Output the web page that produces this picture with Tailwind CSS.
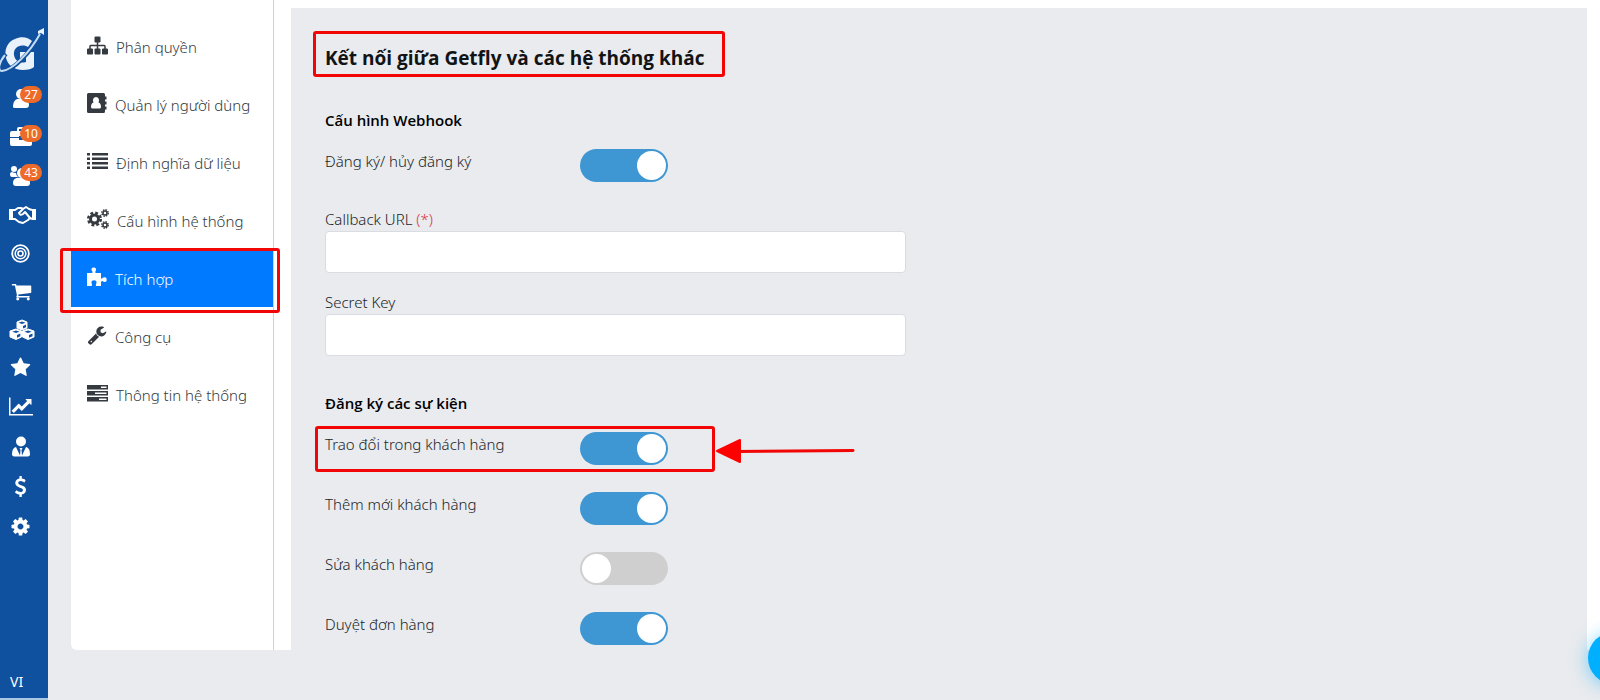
<!DOCTYPE html>
<html lang="vi">
<head>
  <meta charset="UTF-8" />
  <meta name="viewport" content="width=device-width, initial-scale=1.0"/>
  <title>Getfly - Tích hợp</title>
  <script src="https://cdn.jsdelivr.net/npm/@tailwindcss/browser@4"></script>
  <style>
    body {
      font-family: 'Noto Sans', 'Open Sans', sans-serif;
    }
    h1, h2 {
      font-family: 'Open Sans', 'Noto Sans', sans-serif;
    }
  </style>
</head>

<body class="bg-[#e9ebee] text-[#212529] flex min-h-screen overflow-hidden">

<!-- Sidebar -->
<aside class="w-12 shrink-0 min-h-screen bg-[#10519f] text-white flex flex-col border-b-2 border-[#a9c6e6]">
  <a href="#" aria-label="Getfly" class="block mt-7 h-[50px]">
    <svg class="w-12 h-[46px]" viewBox="0 0 48 46" fill="none">
      <path d="M32 13C28 9 21 8 15 11C7 14 4 22 6 30C8 38 15 42 23 42C28 42 32 41 34 39V24H20V30H26V34C20 36 15 33 14 27C13 20 20 15 28 19Z" fill="#e9f1fa"/>
      <path d="M6 26C-1 34 -3 43 3 43C14 42 31 24 41 5" stroke="#10519f" stroke-width="4"/>
      <path d="M5 27C-1 34 -3 43 2 43C13 42 30 24 40 6" stroke="#c5dcf3" stroke-width="2"/>
      <path d="M44 0L44 7L41 5L38 6L38 3Z" fill="#e9f1fa"/>
    </svg>
  </a>

  <nav class="flex flex-col">
    <a href="#" aria-label="Khách hàng" class="relative h-[39px] pl-[10px] flex items-center">
      <svg class="w-[22px] h-[22px]" viewBox="0 0 22 22" fill="currentColor"><circle cx="11" cy="7" r="5"/><path d="M3 20C3 13 7 11 11 12C15 11 19 13 19 18Q19 21 16 21H5Q3 21 3 20Z"/></svg>
      <span class="absolute left-5 top-2 w-[22px] h-[17px] rounded-full bg-[#ee6a28] text-xs leading-[17px] text-center">27</span>
    </a>
    <a href="#" aria-label="Công việc" class="relative h-[39px] pl-[10px] flex items-center">
      <svg class="w-[22px] h-[22px]" viewBox="0 0 22 22" fill="currentColor"><path d="M7 5V3Q7 1 9 1H14Q16 1 16 3V5H20Q22 5 22 7V11H13V10H9V11H0V7Q0 5 2 5ZM9 5H14V3H9ZM0 12H9V14H13V12H22V18Q22 20 20 20H2Q0 20 0 18Z"/></svg>
      <span class="absolute left-5 top-2 w-[22px] h-[17px] rounded-full bg-[#ee6a28] text-xs leading-[17px] text-center">10</span>
    </a>
    <a href="#" aria-label="Nhóm" class="relative h-[39px] pl-[10px] flex items-center">
      <svg class="w-[22px] h-[22px]" viewBox="0 0 22 22" fill="currentColor"><circle cx="4" cy="4" r="3"/><circle cx="12" cy="8" r="5"/><path d="M0 9Q0 7 2 7Q4 8 6 8Q6 10 8 12H2Q0 12 0 9ZM3 18C3 13 7 12 12 13C17 12 20 14 20 18Q20 21 17 21H6Q3 21 3 18Z"/></svg>
      <span class="absolute left-5 top-2 w-[22px] h-[17px] rounded-full bg-[#ee6a28] text-xs leading-[17px] text-center">43</span>
    </a>
    <a href="#" aria-label="Cơ hội" class="h-[39px] pl-[9px] flex items-center">
      <svg class="w-[27px] h-[18px]" viewBox="0 0 27 18" fill="none" stroke="currentColor" stroke-width="2" stroke-linejoin="round"><path d="M0 3H4V14H0ZM27 3H23V14H27Z" fill="currentColor" stroke="none"/><path d="M4 4H6L9 2H12L14 3L17 1L20 3L23 4M4 13H6L10 16L14 17L19 14L21 12L23 13"/><path d="M14 3L10 7Q11 10 14 8L16 6L21 12"/></svg>
    </a>
    <a href="#" aria-label="Mục tiêu" class="h-[38px] pl-[11px] flex items-center">
      <svg class="w-[19px] h-[19px]" viewBox="0 0 19 19" fill="none" stroke="currentColor"><circle cx="9.5" cy="9.500" r="8.300" stroke-width="1.800"/><circle cx="9.500" cy="9.500" r="5.300" stroke-width="1.500"/><circle cx="9.500" cy="9.500" r="2.500" stroke-width="1.600"/></svg>
    </a>
    <a href="#" aria-label="Đơn hàng" class="h-[38px] pl-[11px] flex items-center">
      <svg class="w-[21px] h-[21px]" viewBox="0 0 1792 1792" fill="currentColor"><path d="M704 1536q0 52-38 90t-90 38-90-38-38-90 38-90 90-38 90 38 38 90zm896 0q0 52-38 90t-90 38-90-38-38-90 38-90 90-38 90 38 38 90zm128-1088v512q0 24-16.500 42.500t-40.500 21.500l-1044 122q13 60 13 70 0 16-24 64h920q26 0 45 19t19 45-19 45-45 19h-1024q-26 0-45-19t-19-45q0-11 8-31.500t16-36 21.500-40 15.500-29.500l-177-823h-204q-26 0-45-19t-19-45 19-45 45-19h256q16 0 28.500 6.500t19.500 15.500 13 24.500 8 26 5.500 29.500 4.500 26h1201q26 0 45 19t19 45z"/></svg>
    </a>
    <a href="#" aria-label="Kho" class="h-[38px] pl-[9px] flex items-center">
      <svg class="w-[26px] h-[21px]" viewBox="0 0 26 21">
        <g fill="#fff" stroke="#fff" stroke-width="1" stroke-linejoin="round"><path d="M13 1L18 3V9L13 11L8 9V3Z"/><path d="M7 10L12.500 12V18L7 20.500L1 18V12Z"/><path d="M19 10L25 12V18L19 20.500L13.500 18V12Z"/></g>
        <g fill="#10519f"><path d="M13 2.500L16.500 3.700L13 5L9.500 3.700ZM14 7L17 5.500V8.300L14 9.500Z"/><path d="M7 11.500L10.500 12.700L7 14L3.300 12.700ZM8 16L11.300 14.500V17.300L8 18.700Z"/><path d="M19 11.500L22.700 12.700L19 14L15.500 12.700ZM20 16L23.500 14.500V17.300L20 18.700Z"/></g>
      </svg>
    </a>
    <a href="#" aria-label="Đánh giá" class="h-[38px] pl-[10px] flex items-center">
      <svg class="w-[21px] h-[21px]" viewBox="0 0 1792 1792" fill="currentColor"><path d="M1728 647q0 22-26 48l-363 354 86 500q1 7 1 20 0 21-10.500 35.500t-30.500 14.500q-19 0-40-12l-449-236-449 236q-22 12-40 12-21 0-31.500-14.500t-10.500-35.500q0-6 2-20l86-500-364-354q-25-27-25-48 0-37 56-46l502-73 225-455q19-41 49-41t49 41l225 455 502 73q56 9 56 46z"/></svg>
    </a>
    <a href="#" aria-label="Báo cáo" class="h-10 pl-[9px] flex items-center">
      <svg class="w-6 h-[21px]" viewBox="0 0 2048 1792" fill="currentColor"><path d="M2048 1536v128h-2048v-1536h128v1408h1920zm-128-1248v435q0 21-19.500 29.500t-35.500-7.500l-121-121-633 633q-10 10-23 10t-23-10l-233-233-416 416-192-192 585-585q10-10 23-10t23 10l233 233 464-464-121-121q-16-16-7.500-35.500t29.500-19.500h435q14 0 23 9t9 23z"/></svg>
    </a>
    <a href="#" aria-label="Nhân sự" class="h-10 pl-3 flex items-center">
      <svg class="w-[18px] h-[21px]" viewBox="0 0 18 21" fill="currentColor"><circle cx="9" cy="5.500" r="5"/><path d="M4 11L8 19.500L8.500 14L7.500 12H10.500L9.500 14L10 19.500L14 11Q18 12 18 18Q18 20.500 15.500 20.500H2.500Q0 20.500 0 18Q0 12 4 11Z"/></svg>
    </a>
    <a href="#" aria-label="Tài chính" class="h-10 pl-[10px] flex items-center">
      <svg class="w-[21px] h-[21px]" viewBox="0 0 1792 1792" fill="currentColor"><path d="M1362 1185q0 153-99.500 263.500t-258.500 136.500v175q0 14-9 23t-23 9h-135q-13 0-22.500-9.500t-9.500-22.500v-175q-66-9-127.500-31t-101.500-44.500-74-48-46.500-37.500-17.500-18q-17-21-2-41l103-135q7-10 23-12 15-2 24 9l2 2q113 99 243 125 37 8 74 8 81 0 142.500-43t61.500-122q0-28-15-53t-33.500-42-58.500-37.500-66-32-80-32.500q-39-16-61.500-25t-61.500-26.500-62.500-31-56.500-35.500-53.500-42.500-43.500-49-35.500-58-21-66.500-8.500-78q0-138 98-242t255-134v-180q0-13 9.500-22.500t22.500-9.500h135q14 0 23 9t9 23v176q57 6 110.500 23t87 33.500 63.500 37.500 39 29 15 14q17 18 5 38l-81 146q-8 15-23 16-14 3-27-7-3-3-14.500-12t-39-26.500-58.500-32-74.500-26-85.500-11.500q-95 0-155 43t-60 111q0 26 8.500 48t29.500 41.500 39.500 33 56 31 60.500 27 70 27.500q53 20 81 31.500t76 35 75.500 42.500 62 50 53 63.500 31.500 76.500 13 94z"/></svg>
    </a>
    <a href="#" aria-label="Cài đặt" class="h-10 pl-[10px] flex items-center">
      <svg class="w-[21px] h-[21px]" viewBox="0 0 1792 1792" fill="currentColor"><path d="M1152 896q0-106-75-181t-181-75-181 75-75 181 75 181 181 75 181-75 75-181zm512-109v222q0 12-8 23t-20 13l-185 28q-19 54-39 91 35 50 107 138 10 12 10 25t-9 23q-27 37-99 108t-94 71q-12 0-26-9l-138-108q-44 23-91 38-16 136-29 186-7 28-36 28h-222q-14 0-24.500-8.500t-11.500-21.500l-28-184q-49-16-90-37l-141 107q-10 9-25 9-14 0-25-11-126-114-165-168-7-10-7-23 0-12 8-23 15-21 51-66.500t54-70.500q-27-50-41-99l-183-27q-13-2-21-12.500t-8-23.500v-222q0-12 8-23t19-13l186-28q14-46 39-92-40-57-107-138-10-12-10-24 0-10 9-23 26-36 98.500-107.500t94.500-71.500q13 0 26 10l138 107q44-23 91-38 16-136 29-186 7-28 36-28h222q14 0 24.500 8.500t11.500 21.500l28 184q49 16 90 37l142-107q9-9 24-9 13 0 25 10 129 119 165 170 7 8 7 22 0 12-8 23-15 21-51 66.500t-54 70.500q26 50 41 98l183 28q13 2 21 12.500t8 23.500z"/></svg>
    </a>
  </nav>

  <button type="button" class="mt-auto mb-1.5 pl-[10px] text-left text-sm">VI</button>
</aside>

<!-- Main -->
<main class="flex-1 min-w-0 pl-[23px] pb-[50px] flex">
  <div class="flex-1 flex bg-white rounded-bl-md">

    <!-- Settings menu -->
    <nav class="w-[203px] shrink-0 border-r border-[#cfd1d4] pt-[19px] flex flex-col gap-0.5 font-light text-[15px] text-[#343a40] [&_svg]:mb-1">
      <a href="#" class="h-14 pl-4 flex items-center gap-2">
        <svg class="w-[21px] h-[21px]" viewBox="0 0 1792 1792" fill="currentColor"><path d="M1792 1248v320q0 40-28 68t-68 28h-320q-40 0-68-28t-28-68v-320q0-40 28-68t68-28h96v-192h-512v192h96q40 0 68 28t28 68v320q0 40-28 68t-68 28h-320q-40 0-68-28t-28-68v-320q0-40 28-68t68-28h96v-192h-512v192h96q40 0 68 28t28 68v320q0 40-28 68t-68 28h-320q-40 0-68-28t-28-68v-320q0-40 28-68t68-28h96v-192q0-52 38-90t90-38h512v-192h-96q-40 0-68-28t-28-68v-320q0-40 28-68t68-28h320q40 0 68 28t28 68v320q0 40-28 68t-68 28h-96v192h512q52 0 90 38t38 90v192h96q40 0 68 28t28 68z"/></svg>
        Phân quyền
      </a>
      <a href="#" class="h-14 pl-4 flex items-center gap-2">
        <svg class="w-5 h-5" viewBox="0 0 20 20" fill="currentColor"><path fill-rule="evenodd" d="M1.500 0H16.500Q18 0 18 1.500V18.500Q18 20 16.500 20H1.500Q0 20 0 18.500V1.500Q0 0 1.500 0ZM9 4A3 3.500 0 0 0 6.500 9.500Q4 10 4 14Q4 15.500 5.500 15.500H12.500Q14 15.500 14 14Q14 10 11.500 9.500A3 3.500 0 0 0 9 4Z"/><path d="M18 3.500H19.500V6.500H18ZM18 8.500H19.500V11.500H18ZM18 13.500H19.500V16.500H18Z"/></svg>
        Quản lý người dùng
      </a>
      <a href="#" class="h-14 pl-4 flex items-center gap-2">
        <svg class="w-[21px] h-[18px]" viewBox="0 0 21 18" fill="currentColor"><path d="M0 1H3V3.500H0ZM5 1H21V3.500H5ZM0 5.500H3V8H0ZM5 5.500H21V8H5ZM0 10H3V12.500H0ZM5 10H21V12.500H5ZM0 14.500H3V17H0ZM5 14.500H21V17H5Z"/></svg>
        Định nghĩa dữ liệu
      </a>
      <a href="#" class="h-14 pl-4 flex items-center gap-2">
        <svg class="w-[22px] h-[20px]" viewBox="0 0 22 20" fill="none" stroke="currentColor">
          <circle cx="7.500" cy="10" r="4" stroke-width="3"/><circle cx="7.500" cy="10" r="6.300" stroke-width="2.400" stroke-dasharray="2.800 2.148"/>
          <circle cx="18" cy="4" r="2" stroke-width="1.500"/><circle cx="18" cy="4" r="3.200" stroke-width="1.400" stroke-dasharray="1.500 1.013"/>
          <circle cx="18" cy="16" r="2" stroke-width="1.500"/><circle cx="18" cy="16" r="3.200" stroke-width="1.400" stroke-dasharray="1.500 1.013"/>
        </svg>
        Cấu hình hệ thống
      </a>
      <a href="#" class="relative h-14 pl-4 flex items-center gap-2 bg-[#007bff] text-white">
        <svg class="w-5 h-5" viewBox="0 0 20 20" fill="currentColor"><path d="M0 6H4.500Q6 6 5.500 4.800Q4 3 4.500 1.800Q5.500 0 7.500 .5Q9.500 1 9 3Q8 5 8.300 5.500Q8.500 6 9.500 6H14V10.500Q14 12 15 11.500Q17 9.500 18.800 10.500Q20 11.500 19.700 13.500Q19 15.500 17 15Q15 13.500 14.300 14.500Q14 15 14 16V19H9Q8.500 17.500 9.300 16.500Q10 15 9 13.800Q7 12.500 5 13.800Q4 15 4.700 16.500Q5.500 18 4.500 19H0Z"/></svg>
        Tích hợp
        <span class="absolute -left-[11px] -right-[7px] -top-[3px] -bottom-[6px] border-3 border-[#f20505] rounded-[3px] z-10"></span>
      </a>
      <a href="#" class="h-14 pl-4 flex items-center gap-2">
        <svg class="w-5 h-5" viewBox="0 0 1792 1792" fill="currentColor"><path d="M448 1472q0-26-19-45t-45-19-45 19-19 45 19 45 45 19 45-19 19-45zm644-420l-682 682q-37 37-90 37-52 0-91-37l-106-108q-38-36-38-90 0-53 38-91l681-681q39 98 114.500 173.500t173.500 114.500zm634-435q0 39-23 106-47 134-164.500 217.500t-258.500 83.500q-185 0-316.500-131.500t-131.500-316.500 131.500-316.500 316.500-131.500q58 0 121.500 16.500t107.500 46.500q16 11 16 28t-16 28l-293 169v224l193 107q5-3 79-48.500t135.500-81 70.500-35.500q15 0 23.500 10t8.500 25z"/></svg>
        Công cụ
      </a>
      <a href="#" class="h-14 pl-4 flex items-center gap-2">
        <svg class="w-[21px] h-[18px]" viewBox="0 0 21 18" fill="currentColor"><path fill-rule="evenodd" d="M0 1H21V5.500H0ZM14 2.500V4H19.500V2.500ZM0 7H21V11.500H0ZM8 8.500V10H19.500V8.500ZM0 13H21V17.500H0ZM12 14.500V16H19.500V14.500Z"/></svg>
        Thông tin hệ thống
      </a>
    </nav>

    <!-- Webhook settings -->
    <section class="flex-1 ml-[17px] mt-2 mr-[13px] bg-[#e9ebee] pl-[34px] pt-[35px] font-light text-[15px]">
      <h1 class="relative w-fit text-[19px] leading-[30px] font-bold text-[#111315]">
        Kết nối giữa Getfly và các hệ thống khác
        <span class="absolute -left-3 -right-[20px] -top-3 -bottom-1 border-3 border-[#f20505] rounded-[3px]"></span>
      </h1>

      <form>
        <h2 class="mt-[35px] leading-6 font-semibold text-black">Cấu hình Webhook</h2>
        <label class="mt-[17px] flex h-[34px]">
          <span class="w-[255px] leading-6">Đăng ký/ hủy đăng ký</span>
          <input type="checkbox" checked class="peer sr-only">
          <span class="flex w-[88px] h-[33px] items-center rounded-full bg-[#cfcfcf] p-0.5 peer-checked:bg-[#3e97d3] peer-checked:justify-end"><span class="size-[29px] rounded-full bg-white"></span></span>
        </label>

        <label for="callback" class="block mt-6 leading-6">Callback URL <span class="text-[#dc3545]">(*)</span></label>
        <input type="text" id="callback" class="block w-[581px] h-[42px] px-3 bg-white rounded border border-[#d9dce0]">
        <label for="secret" class="block mt-[17px] leading-6">Secret Key</label>
        <input type="text" id="secret" class="block w-[581px] h-[42px] px-3 bg-white rounded border border-[#d9dce0]">

        <h2 class="mt-[35px] leading-6 font-semibold text-black">Đăng ký các sự kiện</h2>
        <div class="mt-[17px] flex flex-col gap-[26px]">
          <label class="relative flex h-[34px] w-[378px]">
            <span class="w-[255px] leading-6">Trao đổi trong khách hàng</span>
            <input type="checkbox" checked class="peer sr-only">
            <span class="flex w-[88px] h-[33px] items-center rounded-full bg-[#cfcfcf] p-0.5 peer-checked:bg-[#3e97d3] peer-checked:justify-end"><span class="size-[29px] rounded-full bg-white"></span></span>
            <span class="absolute -left-[10px] -right-3 -top-[6px] -bottom-[6px] border-3 border-[#f20505] rounded-[3px]"></span>
            <svg class="absolute left-[391px] top-[6px] w-[140px] h-[26px]" viewBox="0 0 140 26"><path d="M20 13.500L137 12.500" stroke="#f20505" stroke-width="3" stroke-linecap="round"/><path d="M1 13L24 2V24Z" fill="#f00" stroke="#f00" stroke-width="2" stroke-linejoin="round"/></svg>
          </label>
          <label class="flex h-[34px]">
            <span class="w-[255px] leading-6">Thêm mới khách hàng</span>
            <input type="checkbox" checked class="peer sr-only">
            <span class="flex w-[88px] h-[33px] items-center rounded-full bg-[#cfcfcf] p-0.5 peer-checked:bg-[#3e97d3] peer-checked:justify-end"><span class="size-[29px] rounded-full bg-white"></span></span>
          </label>
          <label class="flex h-[34px]">
            <span class="w-[255px] leading-6">Sửa khách hàng</span>
            <input type="checkbox" class="peer sr-only">
            <span class="flex w-[88px] h-[33px] items-center rounded-full bg-[#cfcfcf] p-0.5 peer-checked:bg-[#3e97d3] peer-checked:justify-end"><span class="size-[29px] rounded-full bg-white"></span></span>
          </label>
          <label class="flex h-[34px]">
            <span class="w-[255px] leading-6">Duyệt đơn hàng</span>
            <input type="checkbox" checked class="peer sr-only">
            <span class="flex w-[88px] h-[33px] items-center rounded-full bg-[#cfcfcf] p-0.5 peer-checked:bg-[#3e97d3] peer-checked:justify-end"><span class="size-[29px] rounded-full bg-white"></span></span>
          </label>
        </div>
      </form>
    </section>
  </div>
</main>

<!-- Chat bubble -->
<button type="button" aria-label="Chat" class="fixed -right-10 bottom-4 size-[52px] rounded-full bg-[#00b0ff] shadow-[0_2px_18px_rgba(0,176,255,0.5)]"></button>

</body>
</html>
